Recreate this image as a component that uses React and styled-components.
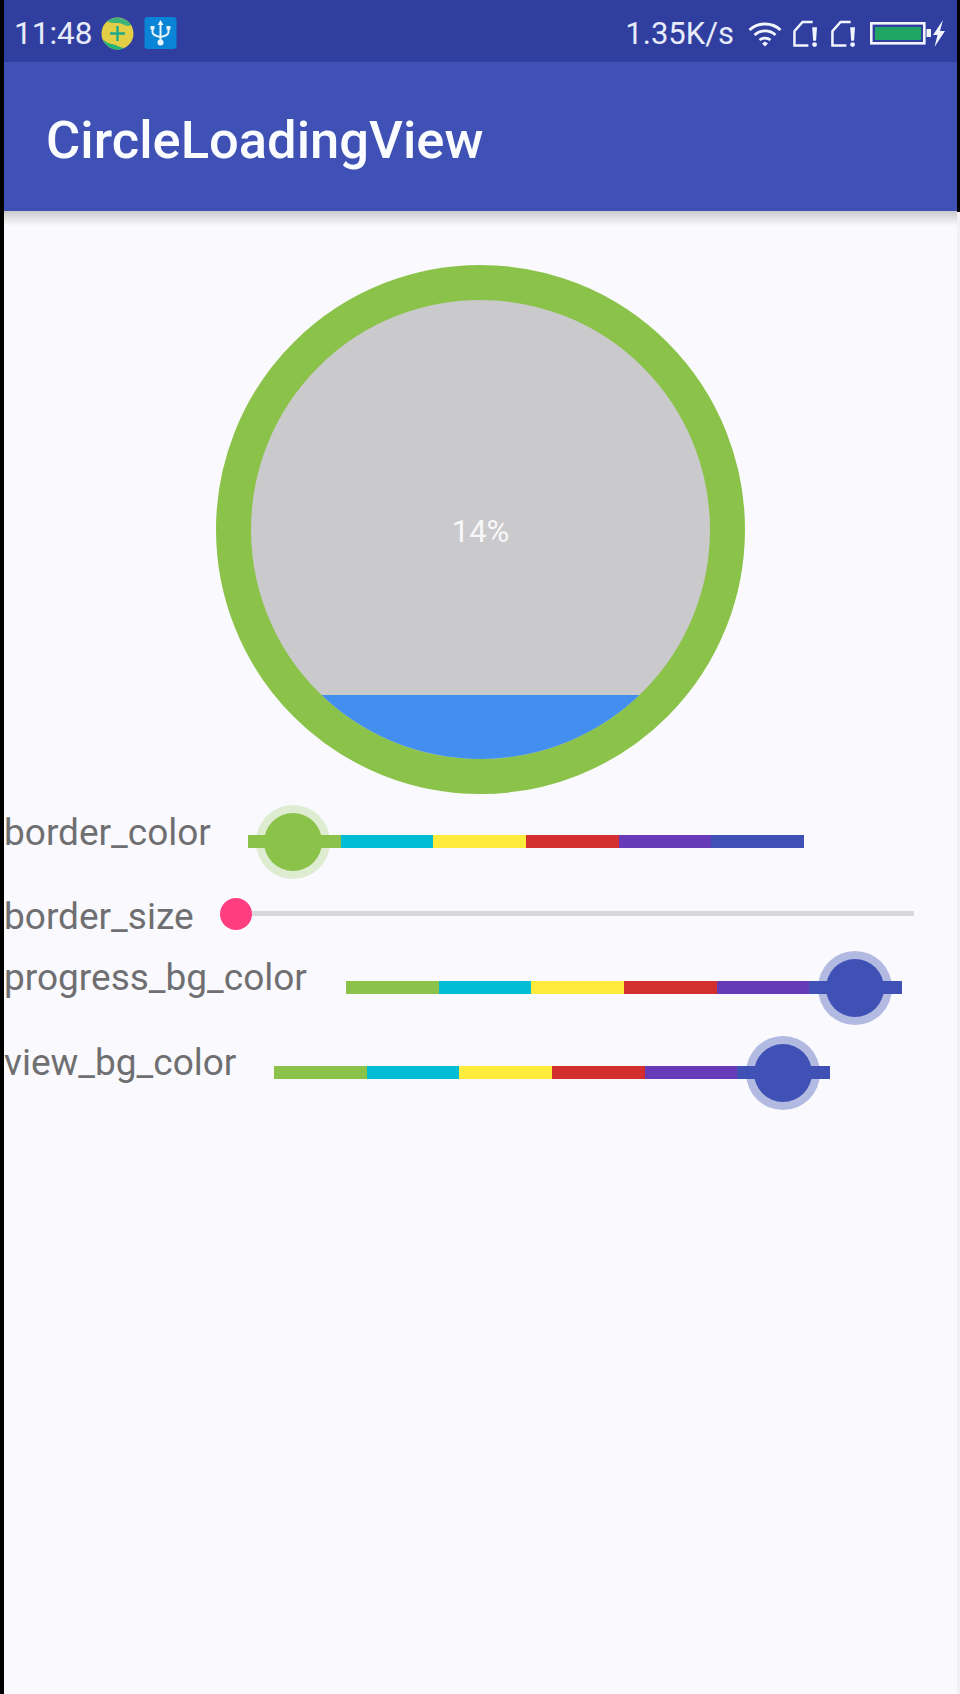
import React from 'react'
import styled, { createGlobalStyle } from 'styled-components'

const SPECTRUM = ['#8bc34a', '#00bcd4', '#ffeb3b', '#d32f2f', '#673ab7', '#3f51b5']

const GlobalStyle = createGlobalStyle`
  html, body {
    margin: 0;
    padding: 0;
    background: #fafafe;
  }
  body {
    font-family: Roboto, "Liberation Sans", sans-serif;
  }
`

const Screen = styled.div`
  width: 960px;
  height: 1694px;
  box-sizing: border-box;
  padding: 0 3px 0 4px;
  background: #fafafe;
  position: relative;
  overflow: hidden;
  &::before {
    content: '';
    position: absolute;
    left: 0;
    top: 0;
    bottom: 0;
    width: 4px;
    background: #000;
  }
  &::after {
    content: '';
    position: absolute;
    right: 0;
    top: 0;
    bottom: 0;
    width: 3px;
    background: linear-gradient(#000 0, #000 212px, #f1f1f3 212px);
  }
`

const StatusBar = styled.div`
  height: 62px;
  box-sizing: border-box;
  background: #303f9f;
  display: flex;
  align-items: center;
  padding: 5px 12px 0 10px;
  color: #e8ecfa;
`

const Clock = styled.span`
  font-size: 31.5px;
  line-height: 36px;
  margin-right: 9px;
`

const Speed = styled.span`
  font-size: 31px;
  line-height: 36px;
  margin-left: auto;
  margin-right: 14px;
`

const NotifyIcon = styled.svg`
  flex: none;
  width: 33px;
  height: 33px;
  margin-right: 10px;
`

const SysIcon = styled.svg`
  flex: none;
  display: block;
  margin-right: ${p => p.$gap || 0}px;
`

const AppBar = styled.header`
  height: 149px;
  background: #3f51b5;
  display: flex;
  align-items: center;
  padding-left: 42px;
  position: relative;
  &::after {
    content: '';
    position: absolute;
    left: 0;
    right: 0;
    top: 100%;
    height: 15px;
    background: linear-gradient(#cbcbcd, #fafafe);
  }
`

const Title = styled.h1`
  margin: 7px 0 0;
  color: #fafcff;
  font-size: 52.5px;
  line-height: 60px;
  font-weight: 500;
`

const Content = styled.main`
  display: flex;
  flex-direction: column;
`

const RingWrap = styled.div`
  display: flex;
  justify-content: center;
  padding-top: 54px;
`

const Ring = styled.div`
  width: 529px;
  height: 529px;
  box-sizing: border-box;
  border-radius: 50%;
  border: 35px solid #8bc34a;
  background: #cac9cb;
  position: relative;
  overflow: hidden;
  display: flex;
  align-items: center;
  justify-content: center;
`

const Water = styled.div`
  position: absolute;
  left: 0;
  right: 0;
  bottom: 0;
  background: #438ff0;
`

const Percent = styled.span`
  color: #f8f8fa;
  font-size: 31px;
  line-height: 36px;
  margin-top: 4px;
  position: relative;
`

const Row = styled.div`
  display: flex;
  align-items: flex-start;
  height: ${p => p.$height}px;
`

const Label = styled.span`
  width: ${p => p.$width}px;
  flex: none;
  color: #6f6f72;
  font-size: 37px;
  line-height: 42px;
  margin-top: ${p => p.$top}px;
`

const Track = styled.div`
  position: relative;
  display: flex;
  flex: none;
  width: ${p => p.$width}px;
  height: ${p => p.$height}px;
  margin-top: ${p => p.$top}px;
  background: ${p => p.$color || 'transparent'};
`

const Segment = styled.div`
  flex: 1;
  background: ${p => p.$color};
`

const Thumb = styled.div`
  position: absolute;
  top: 50%;
  width: 58px;
  height: 58px;
  transform: translate(-50%, -50%);
  border-radius: 50%;
  background: ${p => p.$color};
  box-shadow: 0 0 0 8px ${p => p.$halo};
`

const SmallThumb = styled.div`
  position: absolute;
  top: 50%;
  width: 32px;
  height: 32px;
  transform: translate(-50%, -50%);
  border-radius: 50%;
  background: #ff3d7f;
`

function ColorSlider({ top, thumbAt, color, halo }) {
  return (
    <Track $width={556} $height={13} $top={top}>
      {SPECTRUM.map(c => <Segment key={c} $color={c} />)}
      <Thumb $color={color} $halo={halo} style={{ left: thumbAt }} />
    </Track>
  )
}

function PlusBadge() {
  return (
    <NotifyIcon viewBox="0 0 33 33">
      <circle cx="16.5" cy="16.5" r="16" fill="#e3cf45" />
      <path d="M6 4 C12 -1 24 -1 30 8 C26 11 22 6 17 6 C12 6 9 6 6 4 Z" fill="#3db27a" />
      <path d="M2 23 C5 24 7 27 11 27 C16 28 20 31 23 31 C15 35 6 31 2 23 Z" fill="#22b573" />
      <path d="M16.5 9 V24 M9 16.5 H24" stroke="#1fa88a" strokeWidth="2.4" fill="none" />
    </NotifyIcon>
  )
}

function UsbBadge() {
  return (
    <NotifyIcon viewBox="0 0 33 33">
      <rect x="0.5" y="0" width="32" height="32" rx="3" fill="#0a84d6" />
      <g stroke="#e8f4fc" strokeWidth="2" fill="none">
        <path d="M16.5 5 V24" />
        <path d="M8.5 12 V15 C8.5 18 11 19 16.5 20 C22 19 24.5 18 24.5 15 V12" />
      </g>
      <path d="M16.5 3 L19.5 8 H13.5 Z M6.5 9 H10.5 V12.5 H6.5 Z M22.5 9 H26.5 V12.5 H22.5 Z" fill="#e8f4fc" />
      <circle cx="16.5" cy="25.5" r="3" fill="#e8f4fc" />
    </NotifyIcon>
  )
}

function WifiIcon() {
  return (
    <SysIcon width="34" height="26" viewBox="0 0 34 26" $gap={11}>
      <g fill="none" stroke="#f2f5fd" strokeWidth="2.8">
        <path d="M1.5 9 C10 1 24 1 32.5 9" />
        <path d="M6.5 14 C12.5 8.5 21.5 8.5 27.5 14" />
        <path d="M11.5 19 C14.5 16.5 19.5 16.5 22.5 19" />
      </g>
      <path d="M14 22.5 L17 20.5 L20 22.5 L17 25.5 Z" fill="#f2f5fd" />
    </SysIcon>
  )
}

function SimIcon({ gap }) {
  return (
    <SysIcon width="24" height="28" viewBox="0 0 25 28" $gap={gap}>
      <path d="M16 26 H1.5 V11 L10 1.5 H20.5" fill="none" stroke="#f2f5fd" strokeWidth="2.6" />
      <path d="M20 7 H25 L24 21 H21 Z" fill="#f2f5fd" />
      <circle cx="22.5" cy="25" r="2.5" fill="#f2f5fd" />
    </SysIcon>
  )
}

function BatteryIcon() {
  return (
    <SysIcon width="75" height="28" viewBox="0 0 75 28">
      <rect x="1.3" y="3.3" width="53" height="20" fill="none" stroke="#f2f5fd" strokeWidth="2.6" />
      <rect x="5" y="7" width="46" height="13" fill="#1fa463" />
      <rect x="56.5" y="9" width="4.5" height="8" fill="#f2f5fd" />
      <path d="M73 0 L63 15 H67.5 L64.5 27 L75 11 H70 Z" fill="#f2f5fd" />
    </SysIcon>
  )
}

export default function App() {
  return (
    <>
      <GlobalStyle />
      <Screen>
        <StatusBar>
          <Clock>11:48</Clock>
          <PlusBadge />
          <UsbBadge />
          <Speed>1.35K/s</Speed>
          <WifiIcon />
          <SimIcon gap={14} />
          <SimIcon gap={15} />
          <BatteryIcon />
        </StatusBar>
        <AppBar>
          <Title>CircleLoadingView</Title>
        </AppBar>
        <Content>
          <RingWrap>
            <Ring>
              <Water style={{ height: 64 }} />
              <Percent>14%</Percent>
            </Ring>
          </RingWrap>
          <Row $height={78}>
            <Label $width={244} $top={18}>border_color</Label>
            <ColorSlider top={41} thumbAt={45} color="#8bc34a" halo="rgba(139,195,74,0.25)" />
          </Row>
          <Row $height={62}>
            <Label $width={248} $top={24}>border_size</Label>
            <Track $width={662} $height={5} $top={39} $color="#d8d7d9">
              <SmallThumb style={{ left: -16 }} />
            </Track>
          </Row>
          <Row $height={85}>
            <Label $width={342} $top={23}>progress_bg_color</Label>
            <ColorSlider top={47} thumbAt={509} color="#3f51b5" halo="rgba(63,81,181,0.38)" />
          </Row>
          <Row $height={60}>
            <Label $width={270} $top={23}>view_bg_color</Label>
            <ColorSlider top={47} thumbAt={509} color="#3f51b5" halo="rgba(63,81,181,0.38)" />
          </Row>
        </Content>
      </Screen>
    </>
  )
}
